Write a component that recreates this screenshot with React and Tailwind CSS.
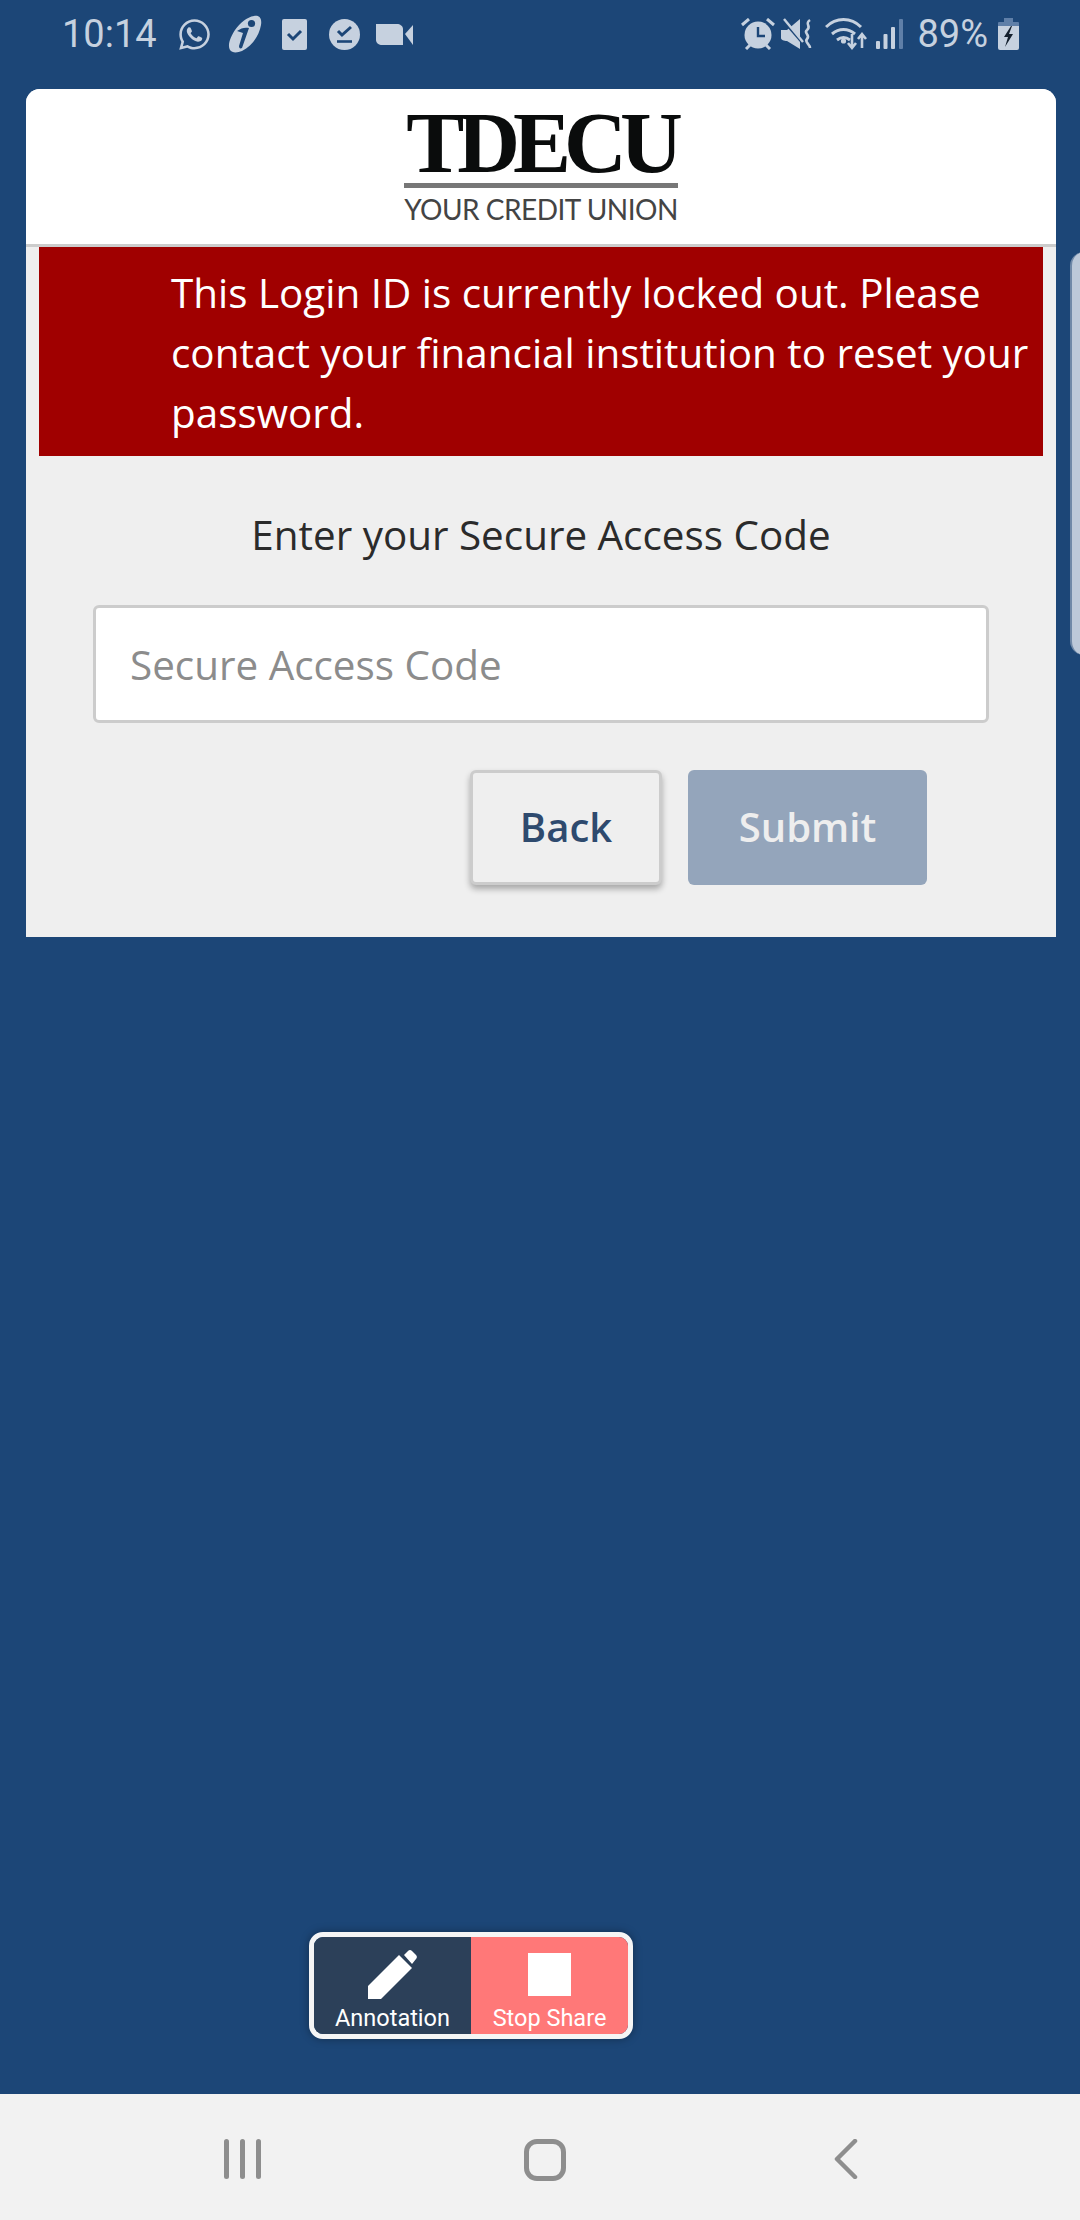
import { FaWhatsapp } from "react-icons/fa";

const BLUE = "#1c4677";
const ICON = "#c6d1df";

const BrandI = () => (
  <svg viewBox="0 0 34 38" className="h-[38px] w-[34px]">
    <path d="M26 1c6-1 8 3 7 9-2 11-9 21-19 26-5 2-10 2-12-1-3-5 1-14 5-20C12 8 19 2 26 1Z" fill={ICON} />
    <circle cx="23.5" cy="8.5" r="3.6" fill={BLUE} />
    <path d="M9 16c4-3 8-4 12-3l-7 20c-2 1-3 0-3-2l4-13c-2-1-4-1-6-2Z" fill={BLUE} />
  </svg>
);

const ClipCheck = () => (
  <svg viewBox="0 0 25 31" className="h-[31px] w-[25px]">
    <rect width="25" height="31" rx="2" fill={ICON} />
    <path d="m6 15 5 5 8-8" fill="none" stroke={BLUE} strokeWidth="3" />
  </svg>
);

const CheckCircle = () => (
  <svg viewBox="0 0 31 31" className="h-[31px] w-[31px]">
    <circle cx="15.5" cy="15.5" r="15.5" fill={ICON} />
    <path d="m9 12 4 4 9-8" fill="none" stroke={BLUE} strokeWidth="3" />
    <path d="M8 22.5h15" stroke={BLUE} strokeWidth="2.6" />
  </svg>
);

const Video = () => (
  <svg viewBox="0 0 37 21" className="h-[21px] w-[37px]">
    <path d="M0 0h21c3 0 6 2 6 5v16H6c-3 0-6-2-6-5Z" fill={ICON} />
    <path d="m29 10 8-9v20Z" fill={ICON} />
  </svg>
);

const Alarm = () => (
  <svg viewBox="0 0 34 32" className="h-[32px] w-[34px]">
    <circle cx="17" cy="17" r="13.5" fill={ICON} />
    <path d="M17 9v9h7" fill="none" stroke={BLUE} strokeWidth="2.4" />
    <path d="m1 7 7-6M33 7l-7-6M5 31l4-4M29 31l-4-4" stroke={ICON} strokeWidth="3" />
  </svg>
);

const MuteVibrate = () => (
  <svg viewBox="0 0 31 32" className="h-[32px] w-[31px]">
    <path d="M0 12h6L19 1v30L6 23c-3 0-6-1-6-3Z" fill={ICON} />
    <path d="m2 2 19 22" stroke={BLUE} strokeWidth="3" />
    <path d="m3 1 19 23" stroke={ICON} strokeWidth="2.4" />
    <path d="M29 2c-6 4 2 6-3 10-4 3 4 5 0 9-3 3 3 5 3 9" fill="none" stroke={ICON} strokeWidth="2.6" />
  </svg>
);

const WifiArrows = () => (
  <svg viewBox="0 0 43 34" className="h-[34px] w-[43px]">
    <path d="M1 10C11 0 26 0 36 10M7 17c7-6 16-6 23 0M12 23c4-3 9-3 13 0" fill="none" stroke={ICON} strokeWidth="3" />
    <circle cx="18.5" cy="24" r="2.6" fill={ICON} />
    <path d="M27 17v14M23 26l4 5 4-5M37 31V17M33 22l4-5 4 5" fill="none" stroke={ICON} strokeWidth="2.6" />
  </svg>
);

const Signal = () => (
  <svg viewBox="0 0 27 30" className="h-[30px] w-[27px]">
    <rect x="0" y="22" width="4" height="8" rx="1" fill={ICON} />
    <rect x="7.5" y="15" width="4" height="15" rx="1" fill={ICON} />
    <rect x="15" y="8" width="4" height="22" rx="1" fill={ICON} />
    <rect x="23" y="0" width="4" height="30" rx="1" fill="#5f7fa8" />
  </svg>
);

const Battery = () => (
  <svg viewBox="0 0 21 32" className="h-[32px] w-[21px]">
    <rect x="6" y="0" width="9" height="5" fill="#5f7fa8" />
    <rect x="0" y="4" width="21" height="6" rx="1" fill="#5f7fa8" />
    <path d="M0 8h21v22a2 2 0 0 1-2 2H2a2 2 0 0 1-2-2Z" fill={ICON} />
    <path d="M13 8 6 19h4l-3 10 8-13h-4l3-8Z" fill="#14202e" />
  </svg>
);

const StatusBar = () => (
  <div className="flex h-[89px] shrink-0 items-start justify-between pl-[62px] pr-[61px] pt-[15px] text-[#c6d1df]">
    <div className="flex items-center">
      <span className="w-[95px] font-['Roboto',sans-serif] text-[38px] leading-[38px]">10:14</span>
      <FaWhatsapp className="ml-[20px] h-[35px] w-[35px]" />
      <span className="ml-[16px]"><BrandI /></span>
      <span className="ml-[20px]"><ClipCheck /></span>
      <span className="ml-[22px]"><CheckCircle /></span>
      <span className="ml-[16px]"><Video /></span>
    </div>
    <div className="flex items-center">
      <Alarm />
      <span className="ml-[6px]"><MuteVibrate /></span>
      <span className="ml-[13px]"><WifiArrows /></span>
      <span className="ml-[8px]"><Signal /></span>
      <span className="ml-[14px] font-['Roboto',sans-serif] text-[38px] leading-[38px]">89%</span>
      <span className="ml-[10px]"><Battery /></span>
    </div>
  </div>
);

const Logo = () => (
  <div className="flex w-[274px] flex-col items-center">
    <div className="whitespace-nowrap font-['Liberation_Serif',serif] text-[87px] font-bold leading-[68px] tracking-[-7px] text-[#0a0c0c]">TDECU</div>
    <div className="mt-[6px] h-[5px] w-full bg-[#777]" />
    <div className="mt-[6px] whitespace-nowrap font-['Lato',sans-serif] text-[28px] leading-[30px] tracking-[-0.5px] text-[#444]">YOUR CREDIT UNION</div>
  </div>
);

const LoginCard = () => (
  <div className="ml-[26px] mr-[24px] h-[848px] overflow-hidden rounded-t-[14px] bg-[#efefef] font-['Open_Sans',sans-serif]">
    <div className="flex h-[158px] justify-center border-b-[3px] border-[#ccc] bg-white pt-[20px]">
      <Logo />
    </div>
    <div className="px-[13px]">
      <div className="h-[209px] bg-[#a00000] pl-[132px] pt-[16px] text-[40.4px] leading-[60px] text-white">
        This Login ID is currently locked out. Please contact your financial institution to reset your password.
      </div>
      <div className="mt-[54px] text-center text-[40.4px] leading-[50px] text-[#2b2b2b]">Enter your Secure Access Code</div>
      <input
        placeholder="Secure Access Code"
        className="ml-[54px] mt-[45px] block h-[118px] w-[896px] rounded-[6px] border-[3px] border-[#ccc] bg-white px-[34px] text-[40.4px] placeholder:text-[#8c8c8c]"
      />
      <div className="mt-[47px] flex justify-end gap-[26px] pr-[116px]">
        <button className="h-[115px] w-[192px] rounded-[6px] border-[3px] border-[#ccc] bg-[#efefef] pb-[2px] text-[40px] font-semibold text-[#2e4a6e] shadow-[0_4px_6px_rgba(0,0,0,0.3)]">Back</button>
        <button className="h-[115px] w-[239px] rounded-[6px] bg-[#94a5bb] pb-[2px] text-[40px] font-semibold text-[#eeeeee]">Submit</button>
      </div>
    </div>
  </div>
);

const ShareToolbar = () => (
  <div className="absolute left-[309px] top-[1932px] flex h-[107px] w-[324px] overflow-hidden rounded-[14px] border-[5px] border-[#f5f5f5] font-['Roboto',sans-serif] text-[23.5px] leading-[26px] text-white shadow-[0_0_8px_rgba(0,0,0,0.35)]">
    <div className="flex w-[157px] flex-col items-center bg-[#2c4059] pt-[13px]">
      <svg viewBox="0 0 49 49" className="h-[49px] w-[49px]">
        <path d="M0 36 31 5l13 13-31 31H0Z" fill="#fff" />
        <path d="m36 5 4-4a3 3 0 0 1 4 0l4 4a3 3 0 0 1 0 4l-4 5Z" fill="#fff" />
      </svg>
      <span className="mt-[6px] whitespace-nowrap">Annotation</span>
    </div>
    <div className="flex w-[157px] flex-col items-center bg-[#ff7878] pt-[16px]">
      <div className="h-[43px] w-[43px] bg-white" />
      <span className="mt-[9px] whitespace-nowrap">Stop Share</span>
    </div>
  </div>
);

const NavBar = () => (
  <div className="flex h-[126px] shrink-0 items-start bg-[#f2f2f2] pt-[45px]">
    <div className="ml-[224px] flex h-[40px] w-[37px] justify-between">
      <span className="h-full w-[5px] rounded-full bg-[#8e8e8e]" />
      <span className="h-full w-[5px] rounded-full bg-[#8e8e8e]" />
      <span className="h-full w-[5px] rounded-full bg-[#8e8e8e]" />
    </div>
    <div className="ml-[263px] h-[42px] w-[42px] rounded-[13px] border-[5px] border-[#8e8e8e]" />
    <svg viewBox="0 0 24 40" className="ml-[268px] h-[40px] w-[24px]">
      <path d="M21 2 3 20l18 18" fill="none" stroke="#8e8e8e" strokeWidth="4.5" strokeLinecap="round" strokeLinejoin="round" />
    </svg>
  </div>
);

export default function App() {
  return (
    <div className="relative flex h-[2220px] w-[1080px] flex-col overflow-hidden bg-[#1c4677]">
      <StatusBar />
      <LoginCard />
      {/* next page card peeking in from the right */}
      <div className="absolute left-[1070px] top-[252px] h-[403px] w-[20px] rounded-l-[14px] border-l-[2px] border-[#6f88a8] bg-[#bcc8d9]" />
      <div className="flex-1" />
      <ShareToolbar />
      <NavBar />
    </div>
  );
}
